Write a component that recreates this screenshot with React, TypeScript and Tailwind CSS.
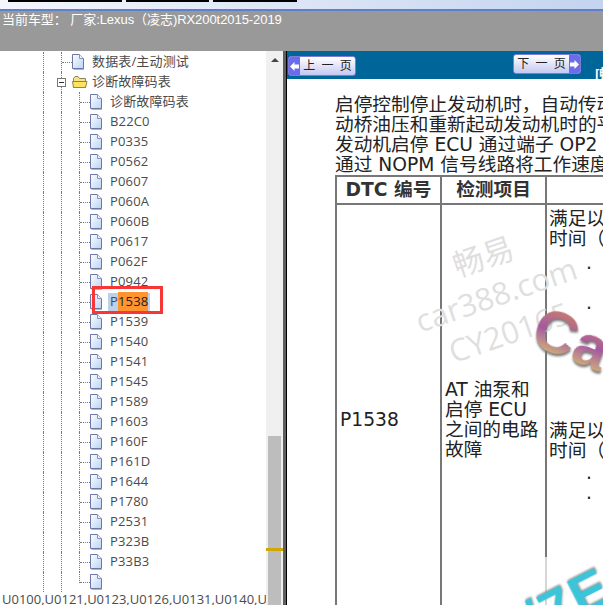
const codes = ['诊断故障码表', 'B22C0', 'P0335', 'P0562', 'P0607', 'P060A', 'P060B', 'P0617', 'P062F', 'P0942', 'P1538', 'P1539', 'P1540', 'P1541', 'P1545', 'P1589', 'P1603', 'P160F', 'P161D', 'P1644', 'P1780', 'P2531', 'P323B', 'P33B3', ''];

function DocIcon() {
  return (
    <svg width="13" height="16" viewBox="0 0 13 16" className="shrink-0">
      <defs>
        <linearGradient id="doc" x1="0" y1="0" x2="1" y2="1">
          <stop offset="0" stopColor="#ffffff" />
          <stop offset="1" stopColor="#b9d3f3" />
        </linearGradient>
      </defs>
      <path d="M1.5 15.5H12" stroke="#b5b5b5" fill="none" />
      <path d="M.5.5H7.5L11.5 4.5V14.5H.5Z" fill="url(#doc)" stroke="#6c78a8" />
      <path d="M7.5.5V4.5H11.5" fill="#eef3fb" stroke="#8a94bb" />
    </svg>
  );
}

function FolderIcon() {
  return (
    <svg width="16" height="14" viewBox="0 0 16 14" className="shrink-0">
      <path d="M1.5 3.5V12.5H13.5V3.5H7.5L6 1.5H3Z" fill="#f7e28d" stroke="#8d8455" />
      <path d="M.5 6.5H12L15 6.5L13.5 12.5H1.5Z" fill="#ffe35e" stroke="#8d8455" />
    </svg>
  );
}

function Guide() {
  return <div className="w-[18px] h-full shrink-0 border-l border-dotted border-[#777]" />;
}

function CodeRow({ label, last }: { label: string; last: boolean }) {
  const selected = label === 'P1538';
  return (
    <div className="relative flex h-5 shrink-0 items-center pl-[43px]">
      <Guide />
      <Guide />
      <div className={`w-[11px] shrink-0 self-start border-l border-dotted border-[#777] ${last ? 'h-[11px]' : 'h-full'}`}>
        <div className="h-[11px] border-b border-dotted border-[#777]" />
      </div>
      <DocIcon />
      {selected ? (
        <>
          <span className="ml-[5px] flex h-[19px] items-center bg-[#bcd1ec] px-[2px]">
            P<span className="bg-[#ff9430] text-[#222]">1538</span>
          </span>
          <div className="absolute left-[92px] top-[-6px] h-[28px] w-[71px] border-[3px] border-[#f73636]" />
        </>
      ) : (
        <span className="ml-[7px]">{label}</span>
      )}
    </div>
  );
}

function PageButton({ label, dir }: { label: string; dir: 'left' | 'right' }) {
  const arrow = (
    <div className="flex h-full w-[11px] shrink-0 items-center justify-center bg-[#6b6bf0]">
      <svg width="9" height="9" viewBox="0 0 9 9">
        <path d={dir === 'left' ? 'M0 4.5 4.5 0V2.5H9V6.5H4.5V9Z' : 'M9 4.5 4.5 0V2.5H0V6.5H4.5V9Z'} fill="#fff" />
      </svg>
    </div>
  );
  return (
    <div className="flex h-[20px] w-[68px] shrink-0 items-center overflow-hidden rounded-[3px] border border-[#7c7cd8] bg-linear-to-b from-white to-[#c5c8f2] text-[12px] whitespace-pre text-[#222]">
      {dir === 'left' && arrow}
      <span className="flex-1 text-center">{label}</span>
      {dir === 'right' && arrow}
    </div>
  );
}

export default function App() {
  return (
    <div className="flex h-[605px] w-[603px] flex-col overflow-hidden bg-white font-['Open_Sans','Noto_Sans_CJK_SC',sans-serif]">
      {/* window top edge */}
      <div className="h-[9px] shrink-0 bg-linear-to-r from-[#f4f6fc] to-[#c4d4ef]">
        <div className="flex h-[2px] gap-[4px] pl-[8px]">
          <div className="w-[114px] bg-black" />
          <div className="w-[83px] bg-black" />
          <div className="w-[84px] bg-black" />
        </div>
      </div>
      <div className="h-[2px] shrink-0 bg-[#5d80cc]" />

      <div className="h-[40px] shrink-0 bg-[#999999] pl-[2px] font-['Liberation_Sans','Noto_Sans_CJK_SC',sans-serif] text-[13px] leading-[18px] tracking-[-0.06px] text-white">
        当前车型： 厂家:Lexus（凌志)RX200t2015-2019
      </div>

      <div className="flex min-h-0 flex-1">
        {/* tree */}
        <div className="flex w-[266px] shrink-0 flex-col overflow-hidden pt-px text-[13px] tracking-[0.15px] text-[#4b4b4b]">
          <div className="flex h-5 shrink-0 items-center pl-[43px]">
            <Guide />
            <div className="h-full w-[11px] shrink-0 self-start border-l border-dotted border-[#777]">
              <div className="h-[11px] border-b border-dotted border-[#777]" />
            </div>
            <DocIcon />
            <span className="ml-[7px]">数据表/主动测试</span>
          </div>
          <div className="relative flex h-5 shrink-0 items-center pl-[43px]">
            <Guide />
            <div className="h-full w-[11px] shrink-0 border-l border-dotted border-[#777]" />
            <FolderIcon />
            <span className="ml-[4px]">诊断故障码表</span>
            <div className="absolute left-[57px] top-[6px] flex h-[9px] w-[9px] items-center justify-center border border-[#777] bg-white">
              <div className="h-px w-[5px] bg-[#333]" />
            </div>
          </div>
          {codes.map((c, i) => (
            <CodeRow key={i} label={c} last={i === codes.length - 1} />
          ))}
          <div className="shrink-0 whitespace-nowrap pl-[2px] text-[13px] leading-[14px] tracking-normal text-[#4b4b4b]">
            U0100,U0121,U0123,U0126,U0131,U0140,U0141
          </div>
        </div>

        {/* scrollbar */}
        <div className="flex w-[17px] shrink-0 flex-col bg-[#f0f0f0]">
          <div className="flex h-[17px] shrink-0 items-center justify-center">
            <div className="h-0 w-0 border-x-[4px] border-b-[4px] border-x-transparent border-b-[#444]" />
          </div>
          <div className="h-[368px] shrink-0" />
          <div className="mx-[2px] flex-1 bg-[#bdbdbd]">
            <div className="mt-[112px] -mx-[2px] h-[3px] bg-[#d0a800]" />
          </div>
        </div>
        <div className="w-[3px] shrink-0 bg-[#5f5f5f]" />
        <div className="w-px shrink-0 bg-black" />

        {/* document */}
        <div className="relative min-w-0 flex-1 overflow-hidden">
          <div className="flex h-[28px] items-start bg-[#006699] pl-px pt-[5px]">
            <PageButton label="上  一  页" dir="left" />
            <div className="ml-[157px] -mt-[2px] shrink-0">
              <PageButton label="下  一  页" dir="right" />
            </div>
            <span className="ml-[14px] mt-[9px] shrink-0 text-[13px] leading-[17px] font-bold whitespace-nowrap text-white">[畅</span>
          </div>

          <div className="whitespace-nowrap pl-[48px] pt-[16px] font-['DejaVu_Sans','Noto_Sans_CJK_SC',sans-serif] text-[18.7px] leading-[20px] text-[#222]">
            <p>启停控制停止发动机时，自动传动桥</p>
            <p>动桥油压和重新起动发动机时的平</p>
            <p>发动机启停 ECU 通过端子 OP2 将</p>
            <p>通过 NOPM 信号线路将工作速度</p>

            <table className="w-[400px] table-fixed border-collapse">
              <colgroup>
                <col className="w-[105px]" />
                <col className="w-[105px]" />
                <col />
              </colgroup>
              <thead>
                <tr className="h-[28px]">
                  <th className="border-2 border-[#777] font-bold text-[#333]">DTC 编号</th>
                  <th className="border-2 border-[#777] font-bold text-[#333]">检测项目</th>
                  <th className="border-2 border-[#777]" />
                </tr>
              </thead>
              <tbody>
                <tr className="h-[432px]">
                  <td className="border-2 border-[#777] pl-[3px] align-middle">P1538</td>
                  <td className="border-2 border-[#777] pl-[3px] whitespace-normal align-middle">
                    AT 油泵和
                    <br />
                    启停 ECU
                    <br />
                    之间的电路
                    <br />
                    故障
                  </td>
                  <td className="border-2 border-[#777] pl-[2px] pt-[4px] align-top">
                    <p>满足以下条件</p>
                    <p>时间（</p>
                    <p className="mt-[10px] pl-[37px]">·</p>
                    <p className="mt-[20px] pl-[37px]">·</p>
                    <p className="mt-[102px]">满足以下条件</p>
                    <p>时间（</p>
                    <p className="mt-[8px] pl-[37px]">·</p>
                    <p className="pl-[37px]">·</p>
                  </td>
                </tr>
              </tbody>
            </table>
          </div>

          {/* watermark, lies over the table */}
          <div className="pointer-events-none absolute left-[114px] top-[183px] flex w-[190px] -rotate-[19deg] flex-col items-center text-[31px] leading-[40px] text-[#dfdfdf]">
            <span>畅易</span>
            <span className="whitespace-nowrap">car388.com</span>
            <span>CY20165</span>
          </div>
          <div className="pointer-events-none absolute left-[246px] top-[254px] flex rotate-[22deg] font-['Liberation_Sans',sans-serif] text-[60px] leading-[68px] font-bold text-transparent">
            <span className="bg-linear-to-b from-[#d98a45] via-[#a5579f] to-[#e8d92a] bg-clip-text drop-shadow-[1px_2px_1px_#777]">C</span>
            <span className="bg-linear-to-b from-[#d98a45] via-[#a5579f] to-[#e8d92a] bg-clip-text drop-shadow-[1px_2px_1px_#777]">a</span>
          </div>
          <div className="pointer-events-none absolute left-[257px] top-[506px] h-[100px] w-[4px] bg-white/70" />
          <div className="pointer-events-none absolute left-[235px] top-[522px] -rotate-[27deg] whitespace-nowrap font-['Liberation_Sans',sans-serif] text-[56px] leading-[60px] font-bold tracking-[2px] text-[#3cc4d8] drop-shadow-[1px_-1px_1px_#888]">
            /7E
          </div>
        </div>
      </div>
    </div>
  );
}
